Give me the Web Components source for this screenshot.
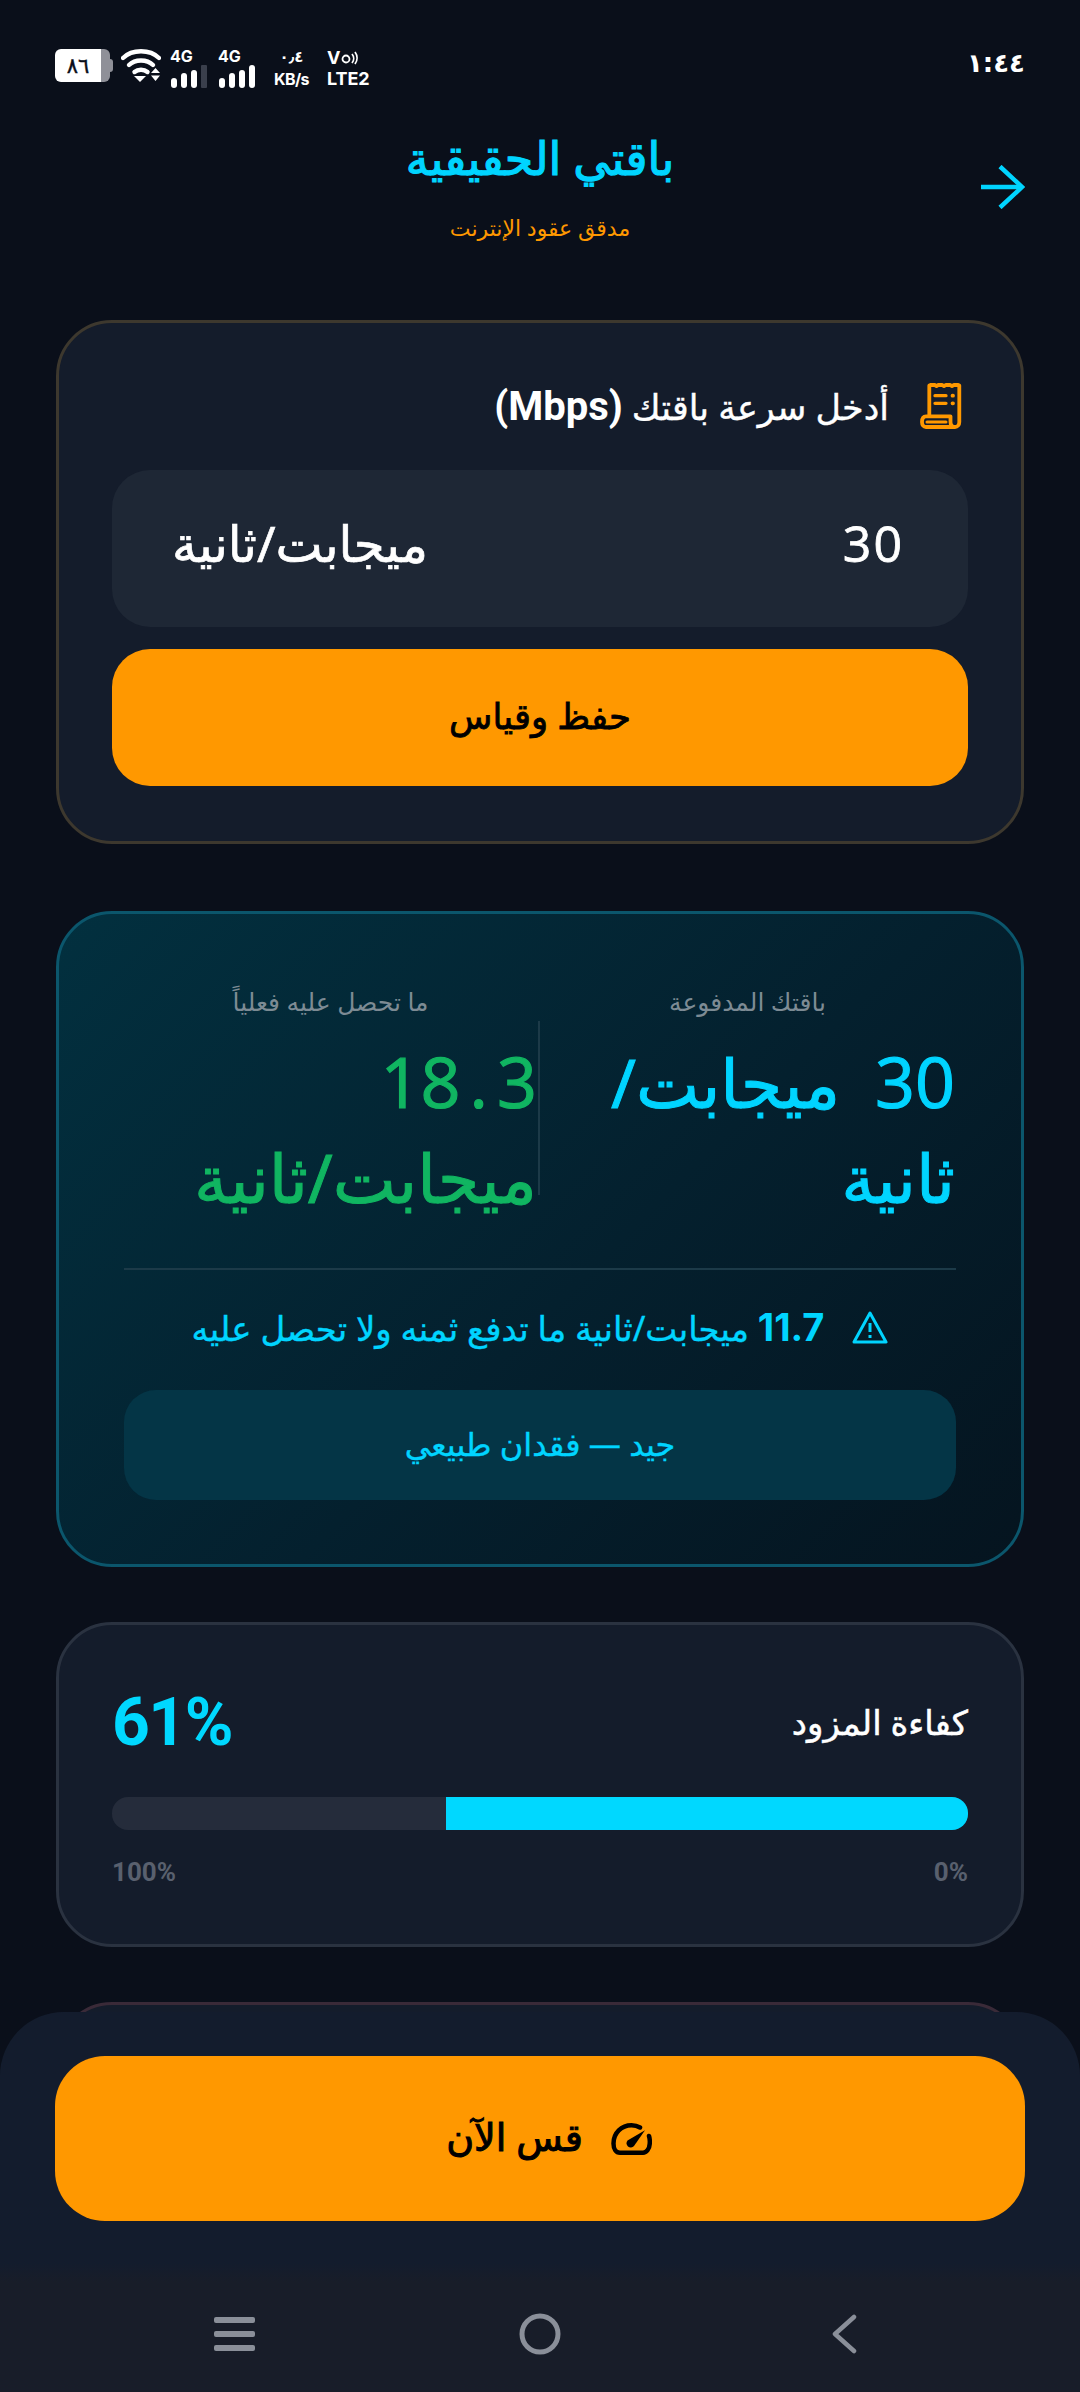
<!DOCTYPE html>
<html lang="ar" dir="rtl">
<head>
<meta charset="utf-8">
<title>باقتي الحقيقية</title>
<style>
	html, body { margin: 0; padding: 0; background: #0a0f1a; }
	body { width: 1080px; height: 2392px; overflow: hidden; position: relative; font-family: "Noto Sans", "DejaVu Sans", sans-serif; color: #fff; }
</style>
</head>
<body>
<audit-app>
	<status-bar></status-bar>
	<app-header></app-header>
	<plan-card></plan-card>
	<result-card></result-card>
	<efficiency-card></efficiency-card>
	<peek-card></peek-card>
</audit-app>
<bottom-sheet></bottom-sheet>

<script>
class AuditApp extends HTMLElement {
	constructor(){
		super()
		this.attachShadow({mode: 'open'}).innerHTML = `
		<style>
			:host{ display: flex; flex-direction: column; width: 1080px; height: 2392px; overflow: hidden; }
		</style>
		<slot></slot>`
	}
}

class StatusBar extends HTMLElement {
	constructor(){
		super()
		const bars = (dim) => `<svg width="38" height="23" viewBox="0 0 38 23"><rect x="1" y="13" width="6" height="10" rx="3" fill="#fff"/><rect x="11" y="8" width="6" height="15" rx="3" fill="#fff"/><rect x="21" y="5" width="6" height="18" rx="3" fill="#fff"/><rect x="31" y="0" width="6" height="23" rx="${dim ? 1 : 3}" fill="${dim ? '#3a3f4c' : '#fff'}"/></svg>`
		this.attachShadow({mode: 'open'}).innerHTML = `
		<style>
			:host{ display: flex; direction: ltr; justify-content: space-between; align-items: flex-start; height: 110px; padding: 49px 55px 0 55px; box-sizing: border-box; font-family: Inter, "Noto Sans", sans-serif; color: #fff; flex: none; }
			.left{ display: flex; align-items: flex-start; }
			.batt{ position: relative; width: 55px; height: 33px; background: linear-gradient(to right, #fff 0 46px, #8f9098 46px); border-radius: 6px; color: #0a0e19; font: 400 21px "DejaVu Sans", sans-serif; -webkit-text-stroke: .4px #0a0e19; display: flex; align-items: center; justify-content: center; padding-right: 9px; box-sizing: border-box; margin-right: 11px; }
			.batt::after{ content: ""; position: absolute; right: -3px; top: 10px; width: 3px; height: 13px; background: #8f9098; border-radius: 0 3px 3px 0; }
			.sig{ display: flex; flex-direction: column; align-items: flex-start; gap: 2px; font-size: 16px; font-weight: 700; line-height: 14px; }
			.two{ display: flex; flex-direction: column; font-weight: 700; }
			.speed{ display: flex; direction: ltr; font: 700 15px "DejaVu Sans", sans-serif; line-height: 24px; }
			.time{ font: 700 26px "DejaVu Sans", sans-serif; line-height: 28px; letter-spacing: -1px; }
			.volte{ display: flex; align-items: center; gap: 1px; font-size: 18px; line-height: 18px; height: 18px; }
		</style>
		<div class="left">
			<div class="batt">٨٦</div>
			<svg width="40" height="34" viewBox="0 0 40 34">
				<g fill="none" stroke="#fff" stroke-width="4.4" stroke-linecap="round">
					<path d="M2 9 C11 0 29 0 38 9"/>
					<path d="M8 16 C14 10 26 10 32 16"/>
					<path d="M13.5 23 C17 20 23 20 26.5 23"/>
				</g>
				<path d="M13 27 H25 L19 33Z" fill="#fff"/>
				<path d="M30 24 L34.500 19 L39 24Z M30 26.500 H39 L34.500 32Z" fill="#fff"/>
			</svg>
			<div class="sig" style="margin-left:9px"><span>4G</span>${bars(true)}</div>
			<div class="sig" style="margin-left:10px"><span>4G</span>${bars(false)}</div>
			<div class="two" style="margin-left:18px;margin-top:-4px;align-items:center"><div class="speed"><span>٠</span><span>٫</span><span>٤</span></div><span style="font-size:16px;line-height:20px;letter-spacing:-.6px;">KB/s</span></div>
			<div class="two" style="margin-left:18px;margin-top:0;align-items:flex-start">
				<div class="volte"><span>V</span><svg width="17" height="14" viewBox="0 0 17 14" fill="none" stroke="#fff" stroke-width="1.800"><circle cx="5" cy="8" r="3.500"/><path d="M11 3 A7 7 0 0 1 11 12 M14 1 A10 10 0 0 1 14 13"/></svg></div>
				<span style="font-size:18px;line-height:18px;margin-top:3px;">LTE2</span>
			</div>
		</div>
		<div class="time">١:٤٤</div>`
	}
}

class AppHeader extends HTMLElement {
	constructor(){
		super()
		this.attachShadow({mode: 'open'}).innerHTML = `
		<style>
			:host{ display: block; position: relative; height: 210px; flex: none; text-align: center; }
			h1{ margin: 0; padding-top: 14px; font-size: 46px; font-weight: 400; -webkit-text-stroke: 1.200px #00d4ff; line-height: 66px; color: #00d4ff; }
			p{ margin: 15px 0 0; font-size: 22px; line-height: 44px; color: #ff9800; }
			svg{ position: absolute; right: 55px; top: 55px; }
		</style>
		<h1>باقتي الحقيقية</h1>
		<p>مدقق عقود الإنترنت</p>
		<svg width="44" height="44" viewBox="0 0 44 44" fill="none" stroke="#00d4ff" stroke-width="4.500"><path d="M0 22 H41"/><path d="M19 1.500 L41 22 L19 42.500"/></svg>`
	}
}

class PlanCard extends HTMLElement {
	constructor(){
		super()
		this.attachShadow({mode: 'open'}).innerHTML = `
		<style>
			:host{ display: block; flex: none; margin: 0 56px; height: 524px; box-sizing: border-box; padding: 51px 53px 0; border: 3px solid #3d382e; border-radius: 56px; background: #141c2b; }
			.title{ display: flex; align-items: center; gap: 31px; height: 64px; font-size: 35px; font-weight: 400; -webkit-text-stroke: .4px #fff; padding-right: 6px; }
			.title b{ font-family: Roboto, sans-serif; font-weight: 700; font-size: 40px; -webkit-text-stroke: 0; }
			.input{ display: flex; justify-content: space-between; align-items: center; height: 157px; margin-top: 32px; padding: 0 64px 12px 60px; box-sizing: border-box; border-radius: 38px; background: #1e2735; font-size: 50px; -webkit-text-stroke: .7px #fff; }
			.num{ font-family: "Open Sans", sans-serif; letter-spacing: 2px; font-size: 50px; -webkit-text-stroke: .8px #fff; }
			.save{ display: flex; justify-content: center; align-items: center; height: 137px; margin-top: 22px; padding-bottom: 6px; box-sizing: border-box; border-radius: 38px; background: #ff9800; color: #000; font-size: 35.500px; -webkit-text-stroke: .8px #000; }
		</style>
		<div class="title">
			<svg width="42" height="46" viewBox="0 0 42 46" fill="none" stroke="#ff9800" stroke-width="3.800" stroke-linejoin="round" stroke-linecap="round">
				<path d="M9.300 33 V2.500 L13 1 L16.500 3 L20 1 L24 3 L28 1 L32 3 L36 1 L39.300 2.500 V39 C39.300 42 37.500 44 35 44 H6 C3.500 44 2 42 2 39 C2 35.500 3.500 33.300 6 33.300 H30.500 V39 C30.500 42 32 44 35 44"/>
				<path d="M15 12.700 H26 M15 20.300 H26" stroke-width="3.300"/>
				<path d="M32.500 12.700 H33 M32.500 20.300 H33" stroke-width="3.800"/>
				<path d="M7 39 H26" stroke-width="3"/>
			</svg>
			<span>أدخل سرعة باقتك <b dir="ltr">(Mbps)</b></span>
		</div>
		<div class="input"><span class="num">30</span><span>ميجابت/ثانية</span></div>
		<div class="save">حفظ وقياس</div>`
	}
}

class ResultCard extends HTMLElement {
	constructor(){
		super()
		this.attachShadow({mode: 'open'}).innerHTML = `
		<style>
			:host{ display: block; flex: none; margin: 67px 56px 0; height: 656px; box-sizing: border-box; padding: 57px 65px 0; border: 3px solid #0b566c; border-radius: 56px; background: linear-gradient(135deg, #02303f 0%, #04202e 55%, #05141f 100%); }
			.cols{ display: grid; grid-template-columns: 1fr 1fr; height: 297px; border-bottom: 2px solid #1c3a48; }
			.col{ position: relative; display: flex; flex-direction: column; }
			.lab{ text-align: center; font-size: 25px; line-height: 60px; color: #7d8b94; height: 50px; }
			.val{ font-size: 67px; line-height: 95px; margin-top: 13px; white-space: nowrap; -webkit-text-stroke: 1px currentColor; }
			.val i{ font: inherit; font-family: "Open Sans", sans-serif; font-size: 70px; letter-spacing: 6px; -webkit-text-stroke: 1.200px currentColor; }
			.val u{ text-decoration: none; margin: 0 9px; }
			.paid{ color: #00d4ff; padding-right: 1px; }
			.real{ color: #10b561; padding-right: 3px; }
			.real::before{ content: ""; position: absolute; right: 0; top: 50px; height: 174px; width: 2px; background: #1c3a48; }
			.warn{ display: flex; justify-content: center; align-items: center; gap: 28px; height: 120px; padding-bottom: 6px; box-sizing: border-box; color: #00d4ff; font-size: 34px; -webkit-text-stroke: .4px #00d4ff; }
			.warn b{ font-family: Inter, sans-serif; font-weight: 700; font-size: 38px; letter-spacing: 2px; -webkit-text-stroke: 0; }
			.verdict{ display: flex; justify-content: center; align-items: center; height: 110px; padding-bottom: 4px; box-sizing: border-box; border-radius: 32px; background: #043546; color: #00d4ff; font-size: 32px; -webkit-text-stroke: .4px #00d4ff; }
		</style>
		<div class="cols">
			<div class="col paid">
				<div class="lab">باقتك المدفوعة</div>
				<div class="val"><i>30</i>&nbsp; ميجابت/<br>ثانية</div>
			</div>
			<div class="col real">
				<div class="lab">ما تحصل عليه فعلياً</div>
				<div class="val"><i>18<u>.</u>3</i><br>ميجابت/ثانية</div>
			</div>
		</div>
		<div class="warn">
			<svg width="36" height="33" viewBox="0 0 36 33" fill="none" stroke="#00d4ff" stroke-width="3" stroke-linejoin="round"><path d="M18 2 L34 31 H2 Z"/><path d="M18 12 V21 M18 24 V27"/></svg>
			<span><b>11.7</b> ميجابت/ثانية ما تدفع ثمنه ولا تحصل عليه</span>
		</div>
		<div class="verdict">جيد — فقدان طبيعي</div>`
	}
}

class EfficiencyCard extends HTMLElement {
	constructor(){
		super()
		this.attachShadow({mode: 'open'}).innerHTML = `
		<style>
			:host{ display: block; flex: none; margin: 55px 56px 0; height: 325px; box-sizing: border-box; padding: 47px 53px 0; border: 3px solid #2a3240; border-radius: 56px; background: #141c2b; }
			.head{ display: flex; justify-content: space-between; align-items: center; height: 100px; }
			.head span{ font-size: 34px; -webkit-text-stroke: .5px #fff; }
			.head b{ font-family: Roboto, sans-serif; font-size: 66px; font-weight: 700; letter-spacing: -1.500px; color: #00d8ff; }
			.track{ height: 33px; margin-top: 25px; border-radius: 16px; background: #252c3b; overflow: hidden; }
			.fill{ width: 61%; height: 100%; background: #00d8ff; }
			.scale{ display: flex; justify-content: space-between; margin-top: 27px; font: 700 26px/30px Roboto, sans-serif; color: #59606e; }
		</style>
		<div class="head"><span>كفاءة المزود</span><b dir="ltr">61%</b></div>
		<div class="track"><div class="fill"></div></div>
		<div class="scale"><span>0%</span><span>100%</span></div>`
	}
}

class PeekCard extends HTMLElement {
	constructor(){
		super()
		this.attachShadow({mode: 'open'}).innerHTML = `
		<style>
			:host{ display: block; flex: none; margin: 55px 56px 0; height: 300px; box-sizing: border-box; border: 3px solid #3a2a38; border-radius: 56px; background: #141c2b; }
		</style>`
	}
}

class BottomSheet extends HTMLElement {
	constructor(){
		super()
		this.attachShadow({mode: 'open'}).innerHTML = `
		<style>
			:host{ display: flex; flex-direction: column; position: absolute; left: 0; right: 0; bottom: 0; height: 380px; border-radius: 64px 64px 0 0; background: linear-gradient(#131c2d 0 66%, #181d29 71%); }
			.go{ display: flex; justify-content: center; align-items: center; gap: 28px; height: 165px; margin: 44px 55px 0; padding-left: 18px; border-radius: 50px; background: #ff9800; color: #000; font-size: 38px; -webkit-text-stroke: 1px #000; flex: none; }
			.go span{ padding-bottom: 6px; }
			nav{ display: flex; direction: ltr; justify-content: space-between; align-items: center; height: 44px; margin-top: 91px; padding: 0 223px 0 214px; }
			nav svg:nth-child(2){ margin-right: 6px; }
		</style>
		<div class="go">
			<svg width="41" height="32" viewBox="0 0 41 32" fill="none" stroke="#000" stroke-width="4.500" stroke-linecap="round"><path d="M38 13 C38.800 15.500 39 18 38.700 21 C38.400 26 35.500 29.700 32 29.700 H9 C5 29.700 2.500 26 2.500 20.500 C2.500 10 10.500 2.300 20.500 2.300 C23.500 2.300 26.500 3 29 4.500"/><path d="M34 7.300 L23 23 A4 4 0 0 1 16.500 17.500 Z" fill="#000" stroke="none"/></svg>
			<span>قس الآن</span>
		</div>
		<nav>
			<svg width="41" height="34" viewBox="0 0 41 34" fill="#8a8f99"><rect y="0" width="41" height="6" rx="2"/><rect y="14" width="41" height="6" rx="2"/><rect y="28" width="41" height="6" rx="2"/></svg>
			<svg width="42" height="42" viewBox="0 0 42 42" fill="none" stroke="#8a8f99" stroke-width="5"><circle cx="21" cy="21" r="18"/></svg>
			<svg width="26" height="40" viewBox="0 0 26 40" fill="none" stroke="#8a8f99" stroke-width="4.500" stroke-linecap="round" stroke-linejoin="round"><path d="M23 3 L4 20 L23 37"/></svg>
		</nav>`
	}
}

customElements.define('audit-app', AuditApp)
customElements.define('status-bar', StatusBar)
customElements.define('app-header', AppHeader)
customElements.define('plan-card', PlanCard)
customElements.define('result-card', ResultCard)
customElements.define('efficiency-card', EfficiencyCard)
customElements.define('peek-card', PeekCard)
customElements.define('bottom-sheet', BottomSheet)
</script>
</body>
</html>
